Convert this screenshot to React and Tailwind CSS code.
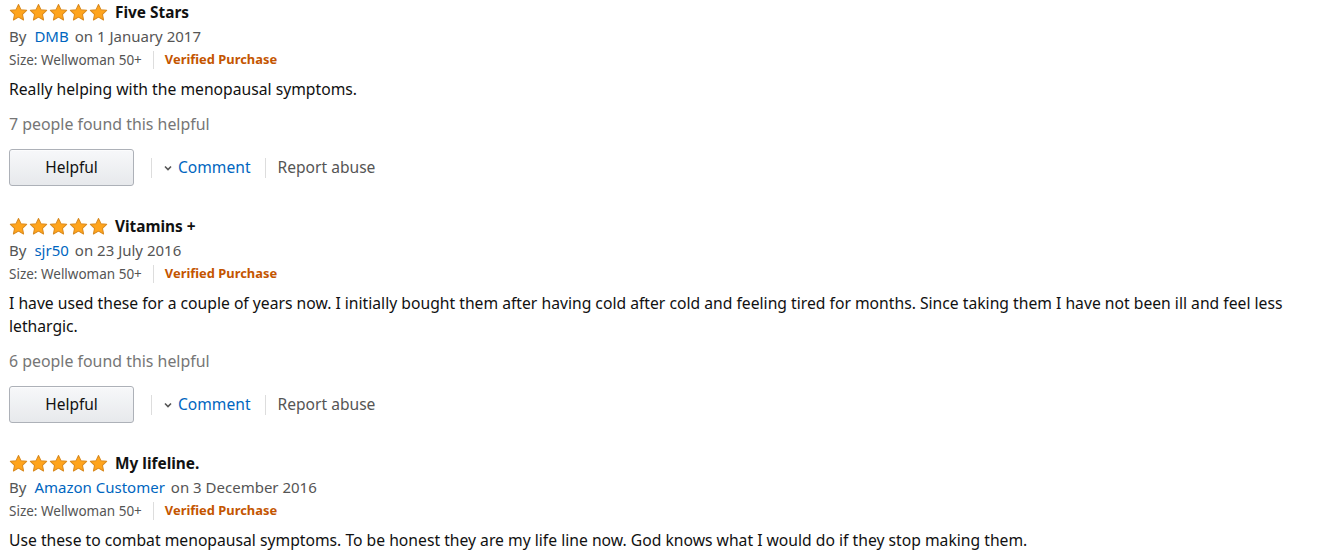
import React from "react";

const reviews = [
  {
    title: "Five Stars",
    author: "DMB",
    date: "1 January 2017",
    body: "Really helping with the menopausal symptoms.",
    helpful: "7 people found this helpful",
  },
  {
    title: "Vitamins +",
    author: "sjr50",
    date: "23 July 2016",
    body: "I have used these for a couple of years now. I initially bought them after having cold after cold and feeling tired for months. Since taking them I have not been ill and feel less lethargic.",
    helpful: "6 people found this helpful",
  },
  {
    title: "My lifeline.",
    author: "Amazon Customer",
    date: "3 December 2016",
    body: "Use these to combat menopausal symptoms. To be honest they are my life line now. God knows what I would do if they stop making them.",
    helpful: null,
  },
];

const Star = () => (
  <svg width="19" height="19" viewBox="0 0 24 24" className="block">
    <path
      d="M12 1.8l3.1 6.6 7.2.9-5.3 5 1.4 7.1L12 17.9l-6.4 3.5L7 14.3l-5.3-5 7.2-.9z"
      fill="#FFA41C"
      stroke="#D98A1F"
      strokeWidth="1.3"
      strokeLinejoin="round"
    />
  </svg>
);

const Review = ({ review }) => (
  <div className="mb-[29px]">
    {/* title row */}
    <div className="flex items-center h-[24px]">
      <div className="flex gap-[1px] mr-[7px] -mt-[1px]">
        {[0, 1, 2, 3, 4].map((i) => (
          <Star key={i} />
        ))}
      </div>
      <span className="text-[15.4px] font-bold text-[#111]">{review.title}</span>
    </div>
    <div className="flex items-center h-[23px] text-[15px] text-[#555]">
      <span>By</span>
      <span className="ml-[8px] text-[#0066c0]">{review.author}</span>
      <span className="ml-[6px]">on {review.date}</span>
    </div>
    <div className="flex items-center h-[24px]">
      <span className="text-[13.5px] text-[#555]">Size: Wellwoman 50+</span>
      <span className="w-px h-[18px] bg-[#ddd] mx-[11px]"></span>
      <span className="text-[12.9px] font-bold text-[#c45500]">Verified Purchase</span>
    </div>
    <p className="mt-[6px] text-[15.7px] leading-[23px] text-[#111] pr-[20px]">{review.body}</p>
    {review.helpful && (
      <>
        <div className="mt-[12px] text-[15.9px] leading-[23px] text-[#767676]">{review.helpful}</div>
        <div className="mt-[13px] flex items-center">
          <button className="w-[125px] h-[37px] rounded-[3px] border border-[#adb1b8] bg-gradient-to-b from-[#f7f8fa] to-[#e7e9ec] text-[15.5px] text-[#111] shadow-[0_1px_0_rgba(255,255,255,0.6)_inset]">
            Helpful
          </button>
          <span className="w-px h-[20px] bg-[#ddd] ml-[17px]"></span>
          <svg width="10" height="10" viewBox="0 0 10 10" className="ml-[11px]">
            <path d="M2 3.5l3 3 3-3" fill="none" stroke="#555" strokeWidth="1.6" />
          </svg>
          <span className="ml-[5px] text-[15.6px] text-[#0066c0]">Comment</span>
          <span className="w-px h-[20px] bg-[#ddd] ml-[14px]"></span>
          <span className="ml-[12px] text-[15.6px] text-[#555]">Report abuse</span>
        </div>
      </>
    )}
  </div>
);

export default function App() {
  return (
    <div className="w-[1319px] h-[553px] overflow-hidden bg-white pl-[9px] pt-[1px] font-['Noto_Sans',sans-serif]">
      {reviews.map((r, i) => (
        <Review key={i} review={r} />
      ))}
    </div>
  );
}
